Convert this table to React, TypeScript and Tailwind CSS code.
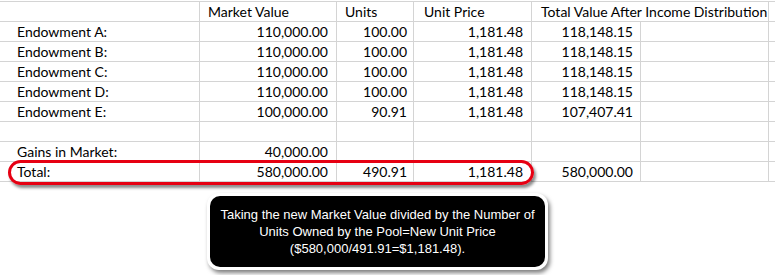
import React from "react";

type Row = {
    label: string;
    market?: string;
    units?: string;
    price?: string;
    total?: string;
};

const rows: Row[] = [
    { label: "Endowment A:", market: "110,000.00", units: "100.00", price: "1,181.48", total: "118,148.15" },
    { label: "Endowment B:", market: "110,000.00", units: "100.00", price: "1,181.48", total: "118,148.15" },
    { label: "Endowment C:", market: "110,000.00", units: "100.00", price: "1,181.48", total: "118,148.15" },
    { label: "Endowment D:", market: "110,000.00", units: "100.00", price: "1,181.48", total: "118,148.15" },
    { label: "Endowment E:", market: "100,000.00", units: "90.91", price: "1,181.48", total: "107,407.41" },
    { label: "" },
    { label: "Gains in Market:", market: "40,000.00" },
    { label: "Total:", market: "580,000.00", units: "490.91", price: "1,181.48", total: "580,000.00" },
];

const cell = "border border-[#d4d4d4] h-5 p-0 leading-[19px] whitespace-nowrap overflow-visible";

export default function App() {
    return (
        <div className="w-[775px] h-[275px] bg-white overflow-hidden font-['Lato',sans-serif] text-[14px] text-black">
            <div className="relative pt-px">
                <table className="table-fixed border-collapse w-[800px] -ml-px">
                    <colgroup>
                        <col className="w-[200px]" />
                        <col className="w-[137px]" />
                        <col className="w-[77px]" />
                        <col className="w-[118px]" />
                        <col className="w-[109px]" />
                        <col className="w-[128px]" />
                        <col className="w-[31px]" />
                    </colgroup>
                    <thead>
                        <tr>
                            <th className={`${cell} pl-[17px] text-left font-normal`}></th>
                            <th className={`${cell} pl-2 text-left font-normal`}>Market Value</th>
                            <th className={`${cell} pl-2 text-left font-normal`}>Units</th>
                            <th className={`${cell} pl-[10px] text-left font-normal`}>Unit Price</th>
                            <th colSpan={2} className={`${cell} pl-[9px] text-left font-normal`}>
                                Total Value After Income Distribution
                            </th>
                            <th className={cell}></th>
                        </tr>
                    </thead>
                    <tbody>
                        {rows.map((r, i) => (
                            <tr key={i}>
                                <td className={`${cell} pl-[17px] text-left`}>{r.label}</td>
                                <td className={`${cell} pr-2 text-right`}>{r.market}</td>
                                <td className={`${cell} pr-[6px] text-right`}>{r.units}</td>
                                <td className={`${cell} pr-2 text-right`}>{r.price}</td>
                                <td className={`${cell} pr-[7px] text-right`}>{r.total}</td>
                                <td className={cell}></td>
                                <td className={cell}></td>
                            </tr>
                        ))}
                    </tbody>
                </table>

                {/* red highlight around the total row */}
                <div className="absolute left-[8px] top-[160px] w-[526px] h-[25px] rounded-full border-[3px] border-[#e60012] shadow-[2px_3px_3px_rgba(0,0,0,0.45)]" />
            </div>

            <div className="ml-[207px] mt-[11px] w-[341px] rounded-[12px] bg-white p-[3px] shadow-[2px_3px_4px_rgba(0,0,0,0.5)]">
                <div className="rounded-[10px] bg-black h-[71px] flex items-center justify-center">
                    <p className="font-['Liberation_Sans',Arial,sans-serif] text-[13px] leading-[17px] text-center text-white">
                        Taking the new Market Value divided by the Number of
                        <br />
                        Units Owned by the Pool=New Unit Price
                        <br />
                        ($580,000/491.91=$1,181.48).
                    </p>
                </div>
            </div>
        </div>
    );
}
